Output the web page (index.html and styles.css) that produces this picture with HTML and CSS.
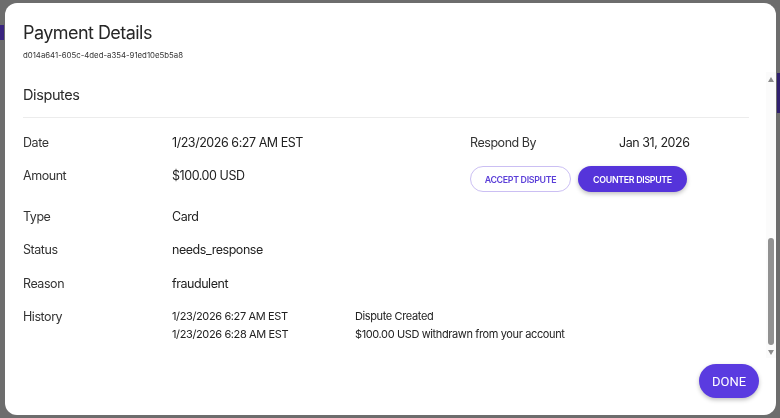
FILE: index.html
```html
<!DOCTYPE html>
<html>
<head>
    <link rel="stylesheet" href="styles.css">
</head>
<body>
    <!-- 弹窗后面的页面（被遮罩） -->
    <div class="page-behind">
        <div class="side-tab"></div>
        <div class="edge-tab"></div>
    </div>

    <div class="modal">
        <!-- 标题 -->
        <div class="modal-header">
            <div class="modal-title">Payment Details</div>
            <div class="payment-id">d014a641-605c-4ded-a354-91ed10e5b5a8</div>
        </div>

        <!-- 内容 + 滚动条 -->
        <div class="modal-body">
            <div class="body-content">
                <div class="section-title">Disputes</div>
                <div class="detail-grid">
                    <div class="label">Date</div>
                    <div class="value">1/23/2026 6:27 AM EST</div>
                    <div class="label">Respond By</div>
                    <div class="value">Jan 31, 2026</div>

                    <div class="label">Amount</div>
                    <div class="value">$100.00 USD</div>
                    <div class="actions">
                        <button class="btn-outline">ACCEPT DISPUTE</button>
                        <button class="btn-solid">COUNTER DISPUTE</button>
                    </div>

                    <div class="label">Type</div>
                    <div class="value wide">Card</div>

                    <div class="label">Status</div>
                    <div class="value wide">needs_response</div>

                    <div class="label">Reason</div>
                    <div class="value wide">fraudulent</div>

                    <div class="label">History</div>
                    <div class="history wide">
                        <div>1/23/2026 6:27 AM EST</div>
                        <div>Dispute Created</div>
                        <div>1/23/2026 6:28 AM EST</div>
                        <div>$100.00 USD withdrawn from your account</div>
                    </div>
                </div>
            </div>

            <div class="scrollbar">
                <div class="arrow-up"></div>
                <div class="thumb"></div>
                <div class="arrow-down"></div>
            </div>
        </div>

        <!-- 底部按钮 -->
        <div class="modal-footer">
            <button class="btn-done">DONE</button>
        </div>
    </div>
</body>
</html>
```

FILE: styles.css
```css
body {
    margin: 0;
    height: 418px;
    overflow: hidden;
    background: #6d6d6d;
    font-family: Inter, 'Liberation Sans', sans-serif;
    color: #2a2a2a;
}

.page-behind {
    display: flex;
    justify-content: space-between;
    height: 100%;
}

.side-tab {
    width: 4px;
    height: 15px;
    margin-top: 25px;
    background: #3a2580;
}

.edge-tab {
    width: 3px;
    height: 40px;
    margin-top: 73px;
    background: #2f1f6e;
}

.modal {
    position: fixed;
    top: 3px;
    left: 5px;
    right: 4px;
    bottom: 3px;
    background: #fff;
    border-radius: 12px;
    display: flex;
    flex-direction: column;
    overflow: hidden;
}

.modal-header {
    padding: 18px 18px 12px 18px;
}

.modal-title {
    font-size: 18px;
    line-height: 24px;
    letter-spacing: -0.55px;
    color: #262626;
}

.payment-id {
    font-size: 7.8px;
    line-height: 10px;
    margin-top: 5px;
    color: #333;
}

.modal-body {
    flex: 1;
    display: flex;
    min-height: 0;
}

.body-content {
    flex: 1;
    padding: 13px 17px 0 18px;
}

.section-title {
    font-size: 14.5px;
    line-height: 20px;
    letter-spacing: -0.4px;
    color: #2a2a2a;
    padding-bottom: 12px;
    border-bottom: 1px solid #ececec;
    margin-bottom: 15px;
}

.detail-grid {
    display: grid;
    grid-template-columns: 149px 298px 149px auto;
    row-gap: 13.4px;
    align-items: start;
}

.label,
.value {
    font-size: 12.5px;
    line-height: 20px;
    letter-spacing: -0.45px;
}

.label {
    color: #333;
}

.value {
    color: #222;
}

.wide {
    grid-column: 2 / 5;
}

.actions {
    grid-column: 3 / 5;
    display: flex;
    gap: 7px;
    padding-bottom: 1px;
}

.btn-outline,
.btn-solid {
    height: 26px;
    border-radius: 13px;
    font-family: Inter, 'Liberation Sans', sans-serif;
    font-size: 8.8px;
    font-weight: 600;
    letter-spacing: -0.3px;
    cursor: pointer;
}

.btn-outline {
    width: 101px;
    background: #fff;
    border: 1px solid #cbbff3;
    color: #5a3ed8;
}

.btn-solid {
    width: 109px;
    background: #5534da;
    border: none;
    color: #fff;
    box-shadow: 0 2px 4px rgba(0, 0, 0, 0.25);
}

.history {
    display: grid;
    grid-template-columns: 183px auto;
    font-size: 11px;
    line-height: 18px;
    letter-spacing: -0.38px;
    color: #222;
}

/* 滚动条 */
.scrollbar {
    width: 10px;
    background: #fbfbfb;
    display: flex;
    flex-direction: column;
    align-items: center;
}

.arrow-up,
.arrow-down {
    width: 0;
    height: 0;
    border-left: 3.5px solid transparent;
    border-right: 3.5px solid transparent;
}

.arrow-up {
    margin-top: 5px;
    border-bottom: 5px solid #8c8c8c;
}

.arrow-down {
    margin: 5px 0 3px;
    border-top: 5px solid #8c8c8c;
}

.thumb {
    width: 6px;
    height: 107px;
    margin-top: auto;
    border-radius: 3px;
    background: #919191;
}

.modal-footer {
    display: flex;
    justify-content: flex-end;
    padding: 6px 17px 17px 0;
}

.btn-done {
    width: 60px;
    height: 34px;
    border-radius: 17px;
    border: none;
    background: #5a3be0;
    color: #fff;
    font-family: Roboto, 'Liberation Sans', sans-serif;
    font-size: 13px;
    box-shadow: 0 2px 4px rgba(0, 0, 0, 0.25);
    cursor: pointer;
}
```
